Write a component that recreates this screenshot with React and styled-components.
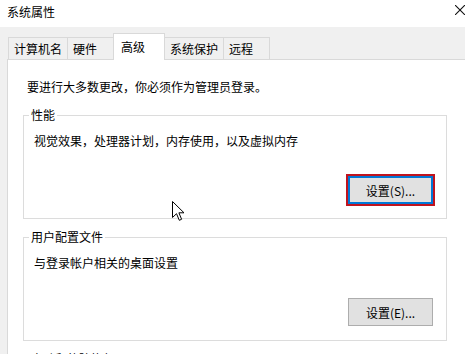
import React from "react";
import styled, { createGlobalStyle } from "styled-components";

const GlobalStyle = createGlobalStyle`
  body {
    margin: 0;
    font-family: "Noto Sans CJK SC", "Noto Sans", sans-serif;
    font-size: 12px;
    color: #000;
  }
`;

const tabs = ["计算机名", "硬件", "高级", "系统保护", "远程"];

const groups = [
  {
    title: "性能",
    desc: "视觉效果，处理器计划，内存使用，以及虚拟内存",
    button: "设置(S)...",
    focused: true
  },
  {
    title: "用户配置文件",
    desc: "与登录帐户相关的桌面设置",
    button: "设置(E)..."
  },
  {
    title: "启动和故障恢复"
  }
];

const Arrow = () => (
  <svg width="13" height="21" viewBox="0 0 13 21">
    <path
      d="M0.5 0.5 L0.5 16.5 L4.5 12.7 L7.3 19.3 L9.6 18.3 L6.9 11.8 L12 11.8 Z"
      fill="#fff"
      stroke="#000"
      strokeWidth="1"
      strokeLinejoin="miter"
    />
  </svg>
);

export default function App() {
  return (
    <Window>
      <GlobalStyle />
      <TitleBar>
        <Title>系统属性</Title>
        <CloseIcon width="10" height="10" viewBox="0 0 10 10">
          <path d="M0 0 L10 10 M10 0 L0 10" stroke="#111" strokeWidth="1.1" />
        </CloseIcon>
      </TitleBar>
      <Body>
        <TabStrip>
          {tabs.map(t => (
            <Tab key={t} $active={t === "高级"}>
              {t}
            </Tab>
          ))}
        </TabStrip>
        <Panel>
          <Intro>要进行大多数更改，你必须作为管理员登录。</Intro>
          {groups.map(g => (
            <Group key={g.title}>
              <Legend>{g.title}</Legend>
              {g.desc && <Desc>{g.desc}</Desc>}
              {g.button && (
                <ButtonRow>
                  <Button $focused={g.focused}>{g.button}</Button>
                </ButtonRow>
              )}
            </Group>
          ))}
        </Panel>
      </Body>
      <Cursor>
        <Arrow />
      </Cursor>
    </Window>
  );
}

const Window = styled.div`
  position: relative;
  width: 465px;
  height: 354px;
  overflow: hidden;
  background: #f0f0f0;
`;

const TitleBar = styled.div`
  display: flex;
  justify-content: space-between;
  align-items: flex-start;
  height: 27px;
  padding-left: 7px;
  background: #fff;
`;

const Title = styled.span`
  line-height: 24px;
`;

const CloseIcon = styled.svg`
  margin-top: 5px;
  flex-shrink: 0;
`;

const Body = styled.div`
  padding: 6px 0 0 7px;
`;

const TabStrip = styled.div`
  position: relative;
  z-index: 1;
  display: flex;
  align-items: flex-end;
  height: 27px;
  margin-bottom: -1px;
  padding-left: 1px;
`;

const Tab = styled.div`
  box-sizing: border-box;
  display: flex;
  align-items: center;
  min-width: ${p => (p.$active ? 52 : 47)}px;
  height: ${p => (p.$active ? 27 : 23)}px;
  padding: 0 ${p => (p.$active ? 7 : 5)}px;
  margin-left: -1px;
  border: 1px solid #d9d9d9;
  border-bottom: ${p => (p.$active ? "none" : "1px solid #d9d9d9")};
  background: ${p => (p.$active ? "#fff" : "#f0f0f0")};
  white-space: nowrap;
  line-height: 16px;
  &:first-child {
    margin-left: 0;
  }
`;

const Panel = styled.div`
  box-sizing: border-box;
  width: 480px;
  height: 320px;
  padding: 19px 0 0 15px;
  background: #fff;
  border: 1px solid #d9d9d9;
`;

const Intro = styled.p`
  margin: 0 0 12px;
  padding-left: 4px;
  line-height: 16px;
`;

const Group = styled.fieldset`
  box-sizing: border-box;
  width: 424px;
  margin: 0 0 10px;
  padding: 10px 13px 14px 10px;
  border: 1px solid #dcdcdc;
`;

const Legend = styled.legend`
  margin-left: -5px;
  padding: 0 2px;
  line-height: 16px;
`;

const Desc = styled.div`
  line-height: 16px;
`;

const ButtonRow = styled.div`
  display: flex;
  justify-content: flex-end;
  margin-top: 27px;
`;

const Button = styled.button`
  box-sizing: border-box;
  width: 85px;
  height: 28px;
  padding: 0;
  font-family: inherit;
  font-size: 12px;
  color: #000;
  background: #e1e1e1;
  border: ${p => (p.$focused ? "2px solid #0078d7" : "1px solid #adadad")};
  outline: ${p => (p.$focused ? "2px solid #c0141f" : "none")};
  border-radius: 0;
`;

const Cursor = styled.div`
  position: absolute;
  left: 172px;
  top: 201px;
  pointer-events: none;
  line-height: 0;
`;
